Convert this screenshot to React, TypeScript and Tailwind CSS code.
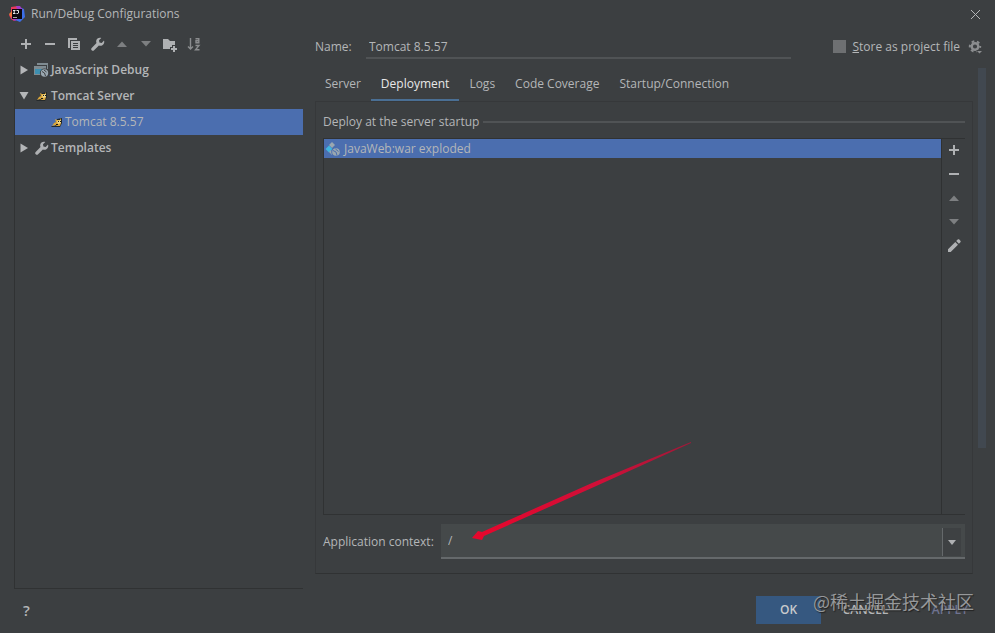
import { useState } from "react";
import type { ReactNode } from "react";

type IconName =
  | "add"
  | "remove"
  | "copy"
  | "wrench"
  | "up"
  | "down"
  | "folder"
  | "sort"
  | "pencil";

interface TreeItem {
  id: string;
  label: string;
  icon: "js" | "tomcat" | "wrench";
  state?: "open" | "closed";
}

const toolbar: { name: IconName; label: string }[] = [
  { name: "add", label: "Add configuration" },
  { name: "remove", label: "Remove configuration" },
  { name: "copy", label: "Copy configuration" },
  { name: "wrench", label: "Edit templates" },
  { name: "up", label: "Move up" },
  { name: "down", label: "Move down" },
  { name: "folder", label: "Create folder" },
  { name: "sort", label: "Sort configurations" },
];

const artifactActions: { name: IconName; label: string }[] = [
  { name: "add", label: "Add artifact" },
  { name: "remove", label: "Remove artifact" },
  { name: "up", label: "Move artifact up" },
  { name: "down", label: "Move artifact down" },
  { name: "pencil", label: "Edit artifact" },
];

const tree: TreeItem[] = [
  { id: "js", label: "JavaScript Debug", icon: "js", state: "closed" },
  { id: "tomcat", label: "Tomcat Server", icon: "tomcat", state: "open" },
  { id: "tomcat-8", label: "Tomcat 8.5.57", icon: "tomcat" },
  { id: "templates", label: "Templates", icon: "wrench", state: "closed" },
];

const tabs = [
  "Server",
  "Deployment",
  "Logs",
  "Code Coverage",
  "Startup/Connection",
];

const shapes: Record<IconName, ReactNode> = {
  add: <path d="M7 3h2v4h4v2H9v4H7V9H3V7h4z" />,
  remove: <path d="M3 7h10v2H3z" />,
  copy: (
    <>
      <path d="M2 2h9v2H4v8H2z" />
      <path
        fillRule="evenodd"
        d="M5 5h9v9H5zM7 7v1h5V7zM7 9v1h5V9zM7 11v1h5v-1z"
      />
    </>
  ),
  wrench: (
    <path d="M14 4.6 11.7 7 9.4 6.600 9 4.300 11.300 2C9.400 1.300 7.300 2 6.500 3.800 6 5 6.100 6.100 6.500 7.100L1.700 11.900C1 12.600 1 13.600 1.700 14.300 2.400 15 3.400 15 4.100 14.300L8.900 9.500C10 10 11.300 9.900 12.400 9.300 14.100 8.300 14.700 6.300 14 4.600z" />
  ),
  up: <path fill="#7d7f81" d="M3 11 8 5.500 13 11z" />,
  down: <path fill="#7d7f81" d="M3 5h10L8 10.500z" />,
  folder: (
    <>
      <path d="M1 3h5l2 2h5v4h-3v2H8v2H1z" />
      <path d="M11 10h2v2h2v2h-2v2h-2v-2H9v-2h2z" />
    </>
  ),
  sort: (
    <g fill="none" stroke="#8b8d8f" strokeWidth="1.400">
      <path d="M4.500 2v11M2 10.500 4.500 13 7 10.500" />
      <path d="M9.500 2.700h3.300v4.100H10V4.800h2.800M9.500 9.500h3.500l-3.500 4.300h4" />
    </g>
  ),
  pencil: (
    <path d="M2 11.300 9.300 4 12 6.700 4.700 14H2zM10.200 3.100 11.700 1.600c.5-.5 1.100-.5 1.600 0l1.100 1.100c.5.500.5 1.100 0 1.600l-1.500 1.500z" />
  ),
};

function Icon({ name }: { name: IconName }) {
  return (
    <svg viewBox="0 0 16 16" className="size-4" fill="#afb1b3" aria-hidden>
      {shapes[name]}
    </svg>
  );
}

function AppLogo() {
  return (
    <svg viewBox="0 0 16 16" className="size-4 shrink-0" aria-hidden>
      <path fill="#e8395c" d="M2 1 9 0l2 8-6 7-3-2L0 9l2-2z" />
      <path fill="#ef7a3c" d="m0 8 3-3 2 5-3 1z" />
      <path fill="#3c6fe8" d="m10 1 5 2 1 8-5 5-5-2z" />
      <path fill="#a03cc8" d="M7 0h4l3 4-5 2zM2 12l4 3 3-2-3-3z" />
      <path fill="#0b0810" d="M3 3h10v10H3z" />
      <path
        fill="none"
        stroke="#e8e8e8"
        d="M4 4.500h2.500M5.200 4.500v3M4 7.500h2.500M7.500 4.500H9.500v2.500l-.6.500H7.500"
      />
      <path fill="none" stroke="#a8a8a8" d="M4 11.500h4" />
    </svg>
  );
}

function JsIcon() {
  return (
    <svg viewBox="0 0 16 16" className="size-4 shrink-0" aria-hidden>
      <path fill="#7f8b91" d="M3 1h11v2H3zM0 4h12v9H0z" />
      <path fill="#7f8b91" d="M13 3h1v4h-1z" />
      <path fill="#3d8fb0" d="M1 7h10v5H1z" />
      <circle cx="10.500" cy="11" r="4.600" fill="#3c3f41" />
      <circle cx="10.500" cy="11" r="3.700" fill="#9aa7b0" />
      <path
        stroke="#3c3f41"
        fill="none"
        d="M8 9.500 10.500 11l1 3M10 8l2.500 2"
      />
    </svg>
  );
}

function TomcatIcon() {
  return (
    <svg viewBox="0 0 16 16" className="size-4 shrink-0" aria-hidden>
      <path fill="#24292b" d="M2 12h4l1-4 1-3 5-1v5l-2 4H3z" />
      <path fill="#d9a63a" d="m6 5 2 1h3l1-2v5l-1 3H8l-2-1-3 1 2-3 2-1z" />
      <path fill="#f0d88a" d="m8 7 4-1v3l-3 1z" />
      <path fill="#15181a" d="M9 7h1v1H9zM11 7h1v1h-1zM7 10h2v1H7z" />
    </svg>
  );
}

function ArtifactIcon() {
  return (
    <svg viewBox="0 0 16 16" className="size-4 shrink-0" aria-hidden>
      <path fill="#9aa7b0" d="m7 1 3 3-3 3-3-3z" />
      <path fill="#40b6e0" d="m4 4.500 3.500 3.500L4 11.500.5 8z" />
      <path fill="#9aa7b0" d="m6 9 2 2-1 3-3-3z" />
      <circle cx="11" cy="11" r="4.800" fill="#4b6eaf" />
      <circle cx="11" cy="11" r="3.800" fill="#9aa7b0" />
      <path
        stroke="#4b6eaf"
        fill="none"
        d="M8 9.500 11 11l1 3.500M10.500 8l3 2.500"
      />
    </svg>
  );
}

function GearIcon() {
  return (
    <svg viewBox="0 0 16 16" className="size-4" aria-hidden>
      <circle
        cx="8"
        cy="7.500"
        r="5.200"
        fill="none"
        stroke="#8b8d8f"
        strokeWidth="2"
        strokeDasharray="2.700 2.745"
        strokeDashoffset="1.350"
      />
      <circle
        cx="8"
        cy="7.500"
        r="3.300"
        fill="none"
        stroke="#8b8d8f"
        strokeWidth="2.400"
      />
      <path fill="#3c3f41" d="M9.500 11H16v5H9.500z" />
      <path fill="#8b8d8f" d="M10 12h5l-2.500 2.500z" />
    </svg>
  );
}

function TreeRow({
  item,
  selected,
  onSelect,
}: {
  item: TreeItem;
  selected: boolean;
  onSelect: () => void;
}) {
  return (
    <li>
      <button
        type="button"
        onClick={onSelect}
        className={`flex h-[26px] w-full items-center text-left ${selected ? "bg-[#4b6eaf]" : ""} ${item.state ? "pl-1 font-semibold" : "pl-[34px]"}`}
      >
        {item.state && (
          <svg viewBox="0 0 10 10" className="mr-[5px] size-[10px]" aria-hidden>
            <path
              fill="#b4b6b8"
              d={item.state === "open" ? "M.5 1h9L5 8.500z" : "M1.500.5v9L9 5z"}
            />
          </svg>
        )}
        {item.icon === "js" && <JsIcon />}
        {item.icon === "tomcat" && <TomcatIcon />}
        {item.icon === "wrench" && <Icon name="wrench" />}
        <span className={item.state ? "pl-px" : ""}>{item.label}</span>
      </button>
    </li>
  );
}

function Sidebar() {
  const [selected, setSelected] = useState("tomcat-8");

  return (
    <aside className="flex w-[289px] shrink-0 flex-col">
      <div className="flex h-[29px] items-center gap-2 pb-px pl-1 pt-1">
        {toolbar.map((action) => (
          <button key={action.name} type="button" aria-label={action.label}>
            <Icon name={action.name} />
          </button>
        ))}
      </div>
      <ul className="flex-1 border-b border-l border-[#303233]">
        {tree.map((item) => (
          <TreeRow
            key={item.id}
            item={item}
            selected={item.id === selected}
            onSelect={() => setSelected(item.id)}
          />
        ))}
      </ul>
    </aside>
  );
}

function PointerArrow() {
  return (
    <svg
      viewBox="0 0 220 100"
      className="pointer-events-none absolute bottom-4 left-[31px] h-[100px] w-[220px]"
      aria-hidden
    >
      <defs>
        <linearGradient id="pointer" x1="1" y1="0" x2="0" y2="1">
          <stop offset="0" stopColor="#a01838" />
          <stop offset="0.4" stopColor="#cf0f38" />
          <stop offset="1" stopColor="#e8062c" />
        </linearGradient>
      </defs>
      <path
        fill="url(#pointer)"
        d="M0 97 6 90 10 91 120 42 219 1 219 2 122 46 12 95 10 99z"
      />
    </svg>
  );
}

function DeploymentPanel() {
  return (
    <section className="mr-[22px] flex flex-1 flex-col border border-[#36383a] border-b-[#303233] pb-[14px] pl-[7px] pr-[7px] pt-3">
      <div className="flex h-4 items-center gap-1">
        <h2>Deploy at the server startup</h2>
        <div className="h-0.5 flex-1 bg-[#505355]" />
      </div>
      <div className="mt-2 flex flex-1 border-y border-l border-[#303233]">
        <ul className="flex-1 border-r border-[#2f3132]">
          <li>
            <button
              type="button"
              className="flex h-[19px] w-full items-center gap-[3px] bg-[#4b6eaf] pl-px text-left"
            >
              <ArtifactIcon />
              JavaWeb:war exploded
            </button>
          </li>
        </ul>
        <div className="flex w-[23px] flex-col items-center gap-2 pt-[3px]">
          {artifactActions.map((action) => (
            <button key={action.name} type="button" aria-label={action.label}>
              <Icon name={action.name} />
            </button>
          ))}
        </div>
      </div>
      <div className="mt-[9px] flex items-center">
        <label htmlFor="context" className="w-[118px] shrink-0">
          Application context:
        </label>
        <div className="relative flex h-[35px] flex-1 border-b-2 border-[#65696b] bg-[#45494a]">
          <input
            id="context"
            defaultValue="/"
            className="min-w-0 flex-1 bg-transparent px-[7px] pt-px outline-none"
          />
          <button
            type="button"
            aria-label="Show recent contexts"
            className="mb-px mr-1 mt-1 flex w-[19px] items-center justify-center border-l border-[#65696b] bg-[#3e4143]"
          >
            <svg viewBox="0 0 8 5" className="h-[5px] w-2" aria-hidden>
              <path fill="#afb1b3" d="M0 0h8L4 5z" />
            </svg>
          </button>
          <PointerArrow />
        </div>
      </div>
    </section>
  );
}

function Editor() {
  const [tab, setTab] = useState("Deployment");

  return (
    <main className="relative ml-3 flex min-w-0 flex-1 flex-col pb-[15px]">
      <div className="flex h-[37px] items-center pr-3">
        <label htmlFor="name" className="w-[51px] shrink-0">
          Name:
        </label>
        <input
          id="name"
          defaultValue="Tomcat 8.5.57"
          className="h-[25px] min-w-0 flex-1 border-b-2 border-[#505355] bg-transparent px-[3px] pt-px outline-none"
        />
        <label className="ml-[42px] flex items-center gap-[6px]">
          <input
            type="checkbox"
            className="size-[13px] appearance-none bg-[#6e7072] checked:bg-[#4b6eaf]"
          />
          <span>
            <u>S</u>tore as project file
          </span>
        </label>
        <button type="button" aria-label="Storage settings" className="ml-[7px]">
          <GearIcon />
        </button>
      </div>
      <nav className="flex h-9 pt-[3px]">
        {tabs.map((name) => (
          <button
            key={name}
            type="button"
            onClick={() => setTab(name)}
            className={`border-b-2 px-[10px] ${name === tab ? "border-[#4a6f94] font-medium text-[#e8e8e8]" : "border-transparent"}`}
          >
            {name}
          </button>
        ))}
      </nav>
      <DeploymentPanel />
      <div className="absolute bottom-[141px] right-[9px] top-10 w-2 bg-[#414850]" />
    </main>
  );
}

export default function App() {
  return (
    <div className="flex min-h-screen flex-col bg-[#3c3f41] font-['Open_Sans','Noto_Sans_CJK_SC',sans-serif] text-[12px] leading-4 text-[#b4b6b8]">
      <header className="flex h-7 items-center gap-[6px] pl-[9px] pr-[14px]">
        <AppLogo />
        <h1 className="flex-1">Run/Debug Configurations</h1>
        <button type="button" aria-label="Close">
          <svg viewBox="0 0 11 11" className="size-[11px]" aria-hidden>
            <path stroke="#b4b6b8" d="m1 1 9 9M10 1l-9 9" />
          </svg>
        </button>
      </header>
      <div className="flex flex-1 pl-[14px]">
        <Sidebar />
        <Editor />
      </div>
      <footer className="relative flex h-11 items-center pb-[2px] pl-[23px] pr-[15px] text-[12px] font-semibold">
        <button type="button" aria-label="Help" className="text-[15px]">
          ?
        </button>
        <div className="ml-auto flex h-7">
          <button
            type="button"
            className="w-[65px] bg-[#365880] text-[#c8cacc]"
          >
            OK
          </button>
          <button type="button" className="w-[89px]">
            CANCEL
          </button>
          <button type="button" className="ml-[10px] w-[60px] text-[#6f7391]">
            APPLY
          </button>
        </div>
        <span className="pointer-events-none absolute right-[21px] top-0 font-['Noto_Sans_CJK_SC',sans-serif] text-[18px] font-normal leading-6 text-[#96989a] [text-shadow:1px_1px_1px_#222]">
          @稀土掘金技术社区
        </span>
      </footer>
    </div>
  );
}
